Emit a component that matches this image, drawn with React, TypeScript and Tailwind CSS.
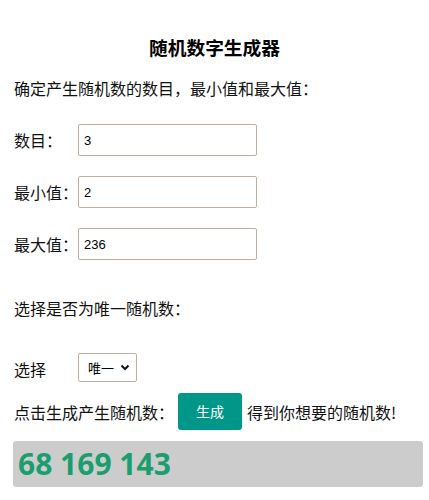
import React from "react";

const cjk = { fontFamily: '"Microsoft YaHei", "Noto Sans CJK SC", "Noto Sans", sans-serif' };

function Row({ label, value, first }: { label: string; value: string; first?: boolean }) {
  return (
    <div className={`flex items-center h-[32px] ${first ? "mt-[25px]" : "mt-[20px]"}`}>
      <span className="w-[64px] text-[16px] leading-[22px] text-[#111]">{label}</span>
      <input
        defaultValue={value}
        className="w-[179px] h-[32px] border border-[#bfb0a3] rounded-[2px] pl-[5px] text-[13px] text-black outline-none"
        style={{ fontFamily: '"Liberation Sans", Arial, sans-serif' }}
      />
    </div>
  );
}

export default function App() {
  return (
    <div className="bg-white w-[429px] h-[500px] pt-[36px] text-[#111]" style={cjk}>
      <h3 className="text-[18.72px] leading-[22px] font-bold text-center text-black">随机数字生成器</h3>
      <div className="pl-[14px]">
        <p className="mt-[19px] text-[16px] leading-[22px]">确定产生随机数的数目，最小值和最大值：</p>
        <Row label="数目：" value="3" first />
        <Row label="最小值：" value="2" />
        <Row label="最大值：" value="236" />
        <p className="mt-[37px] text-[16px] leading-[22px]">选择是否为唯一随机数：</p>
        <div className="mt-[34px] flex items-center h-[29px]">
          <span className="w-[64px] text-[16px] leading-[22px] mt-[3px]">选择</span>
          <div className="relative w-[59px] h-[29px]">
            <select
              defaultValue="唯一"
              className="appearance-none w-full h-full border border-[#bfb0a3] rounded-[2px] bg-white pl-[9px] text-[13px] text-black outline-none"
              style={cjk}
            >
              <option>唯一</option>
              <option>不唯一</option>
            </select>
            <svg
              className="absolute right-[7px] top-[11px] pointer-events-none"
              width="10"
              height="7"
              viewBox="0 0 10 7"
            >
              <path d="M1.5 1.5 L5 5 L8.5 1.5" fill="none" stroke="#111" strokeWidth="2" />
            </svg>
          </div>
        </div>
        <div className="mt-[11px] flex items-center h-[37px]">
          <span className="text-[16px] leading-[22px] w-[164px]">点击生成产生随机数：</span>
          <button className="w-[64px] h-[37px] bg-[#009688] text-white text-[14px] rounded-[3px]" style={cjk}>
            生成
          </button>
          <span className="ml-[5px] text-[16px] leading-[22px]">得到你想要的随机数!</span>
        </div>
      </div>
      <div className="mt-[11px] ml-[13px] w-[410px] h-[46px] bg-[#cccccc] rounded-[3px] pl-[5px] flex items-center">
        <span
          className="text-[30px] font-bold text-[#1a9e6e] leading-none"
          style={{ fontFamily: '"Open Sans", "Noto Sans", sans-serif' }}
        >
          68 169 143
        </span>
      </div>
    </div>
  );
}
